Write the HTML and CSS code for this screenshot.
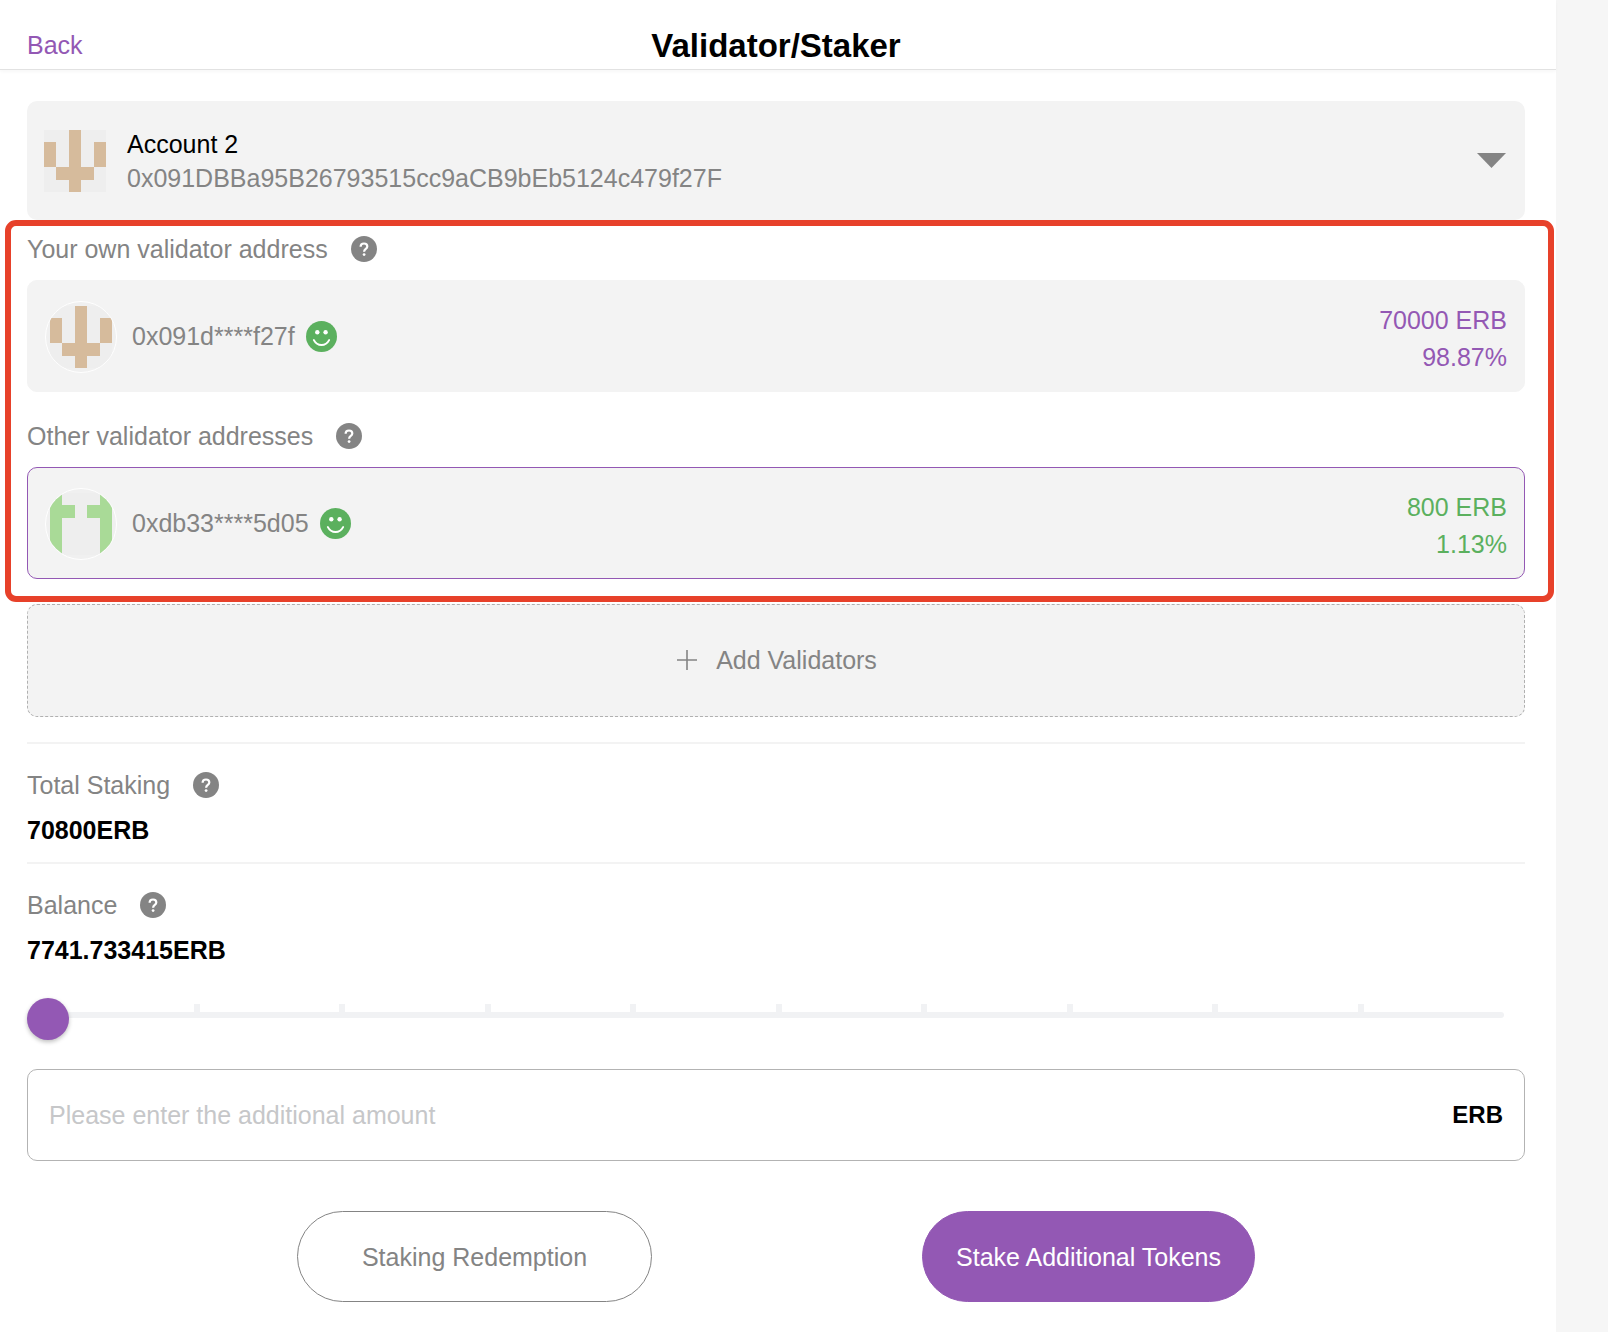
FILE: index.html
```html
<!DOCTYPE html>
<html lang="en">
<head>
<meta charset="utf-8">
<meta name="viewport" content="width=device-width, initial-scale=1">
<title>Validator/Staker</title>
<link rel="stylesheet" href="styles.css">
</head>
<body>
<svg class="sprite" aria-hidden="true">
  <symbol id="help" viewBox="0 0 26 26">
    <circle cx="13" cy="13" r="13" fill="#848484"/>
    <path d="M9.600 10.800C9.600 8.600 11 7.500 13 7.500s3.300 1.200 3.300 3c0 2.400-3.200 2.500-3.200 5.200" fill="none" stroke="#fff" stroke-width="2.200"/>
    <circle cx="13.100" cy="18.600" r="1.400" fill="#fff"/>
  </symbol>
  <symbol id="smile" viewBox="0 0 31 31">
    <circle cx="15.500" cy="15.500" r="15.500" fill="#5bb05e"/>
    <circle cx="11.300" cy="11.300" r="2.200" fill="#fff"/>
    <circle cx="19.600" cy="11.300" r="2.200" fill="#fff"/>
    <path d="M7.800 19c1.800 3.400 4.400 5 7.700 5s5.900-1.600 7.700-5" fill="none" stroke="#fff" stroke-width="1.800" stroke-linecap="round"/>
  </symbol>
  <symbol id="trident" viewBox="0 0 5 5">
    <path d="M0 0h5v5H0z" fill="#eee"/>
    <path d="M2 0h1v3h1V1h1v2H4v1H3v1H2V4H1V3H0V1h1v2h1z" fill="#d6bb9c"/>
  </symbol>
  <symbol id="pillars" viewBox="0 0 5 5">
    <path d="M0 0h5v5H0z" fill="#eee"/>
    <path d="M0 0h1v1h1v1H1v3H0zM5 0H4v1H3v1h1v3h1z" fill="#a9da97"/>
  </symbol>
</svg>
<div class="page">
  <div class="panel">
    <header class="topbar">
      <a class="back" href="#">Back</a>
      <h1 class="title">Validator/Staker</h1>
    </header>
    <main class="content">
      <button class="account" type="button" aria-haspopup="listbox">
        <svg class="identicon" shape-rendering="crispEdges" aria-hidden="true"><use href="#trident"/></svg>
        <span class="account-text">
          <span class="account-name">Account 2</span>
          <span class="account-address">0x091DBBa95B26793515cc9aCB9bEb5124c479f27F</span>
        </span>
        <svg class="caret" viewBox="0 0 29 15" aria-hidden="true"><path d="M0 0h29L14.500 15z" fill="#848484"/></svg>
      </button>

      <div class="validators">
        <section>
          <h2 class="label">Your own validator address <svg class="help" aria-hidden="true"><use href="#help"/></svg></h2>
          <div class="validator">
            <span class="avatar"><svg class="identicon" shape-rendering="crispEdges" aria-hidden="true"><use href="#trident"/></svg></span>
            <span class="address">0x091d****f27f</span>
            <svg class="smile" aria-hidden="true"><use href="#smile"/></svg>
            <div class="amount own"><div>70000 ERB</div><div>98.87%</div></div>
          </div>
        </section>
        <section class="others">
          <h2 class="label">Other validator addresses <svg class="help" aria-hidden="true"><use href="#help"/></svg></h2>
          <div class="validator selected">
            <span class="avatar"><svg class="identicon" shape-rendering="crispEdges" aria-hidden="true"><use href="#pillars"/></svg></span>
            <span class="address">0xdb33****5d05</span>
            <svg class="smile" aria-hidden="true"><use href="#smile"/></svg>
            <div class="amount"><div>800 ERB</div><div>1.13%</div></div>
          </div>
        </section>
      </div>

      <button class="add" type="button">
        <svg class="plus" viewBox="0 0 20 20" aria-hidden="true"><path d="M10 0v20M0 10h20" stroke="#848484" stroke-width="1.600"/></svg>
        Add Validators
      </button>

      <section class="stat">
        <h2 class="label">Total Staking <svg class="help" aria-hidden="true"><use href="#help"/></svg></h2>
        <div class="value">70800ERB</div>
      </section>
      <section class="stat">
        <h2 class="label">Balance <svg class="help" aria-hidden="true"><use href="#help"/></svg></h2>
        <div class="value">7741.733415ERB</div>
      </section>

      <div class="slider">
        <div class="ticks" aria-hidden="true"><i></i><i></i><i></i><i></i><i></i><i></i><i></i><i></i><i></i><i></i></div>
        <input class="range" type="range" min="0" max="100" value="0" aria-label="Share of balance">
      </div>

      <div class="field">
        <input class="field-input" id="amount" type="text" inputmode="decimal" placeholder="Please enter the additional amount" aria-label="Additional amount">
        <label class="unit" for="amount">ERB</label>
      </div>

      <div class="actions">
        <button class="btn outline" type="button">Staking Redemption</button>
        <button class="btn primary" type="button">Stake Additional Tokens</button>
      </div>
    </main>
  </div>
</div>
</body>
</html>
```
FILE: styles.css
```css
* { box-sizing: border-box; }

body {
  margin: 0;
  background: #f6f6f6;
  color: #000;
  font: 25px/28px "Liberation Sans", Arial, sans-serif;
}

button, input { font: inherit; }
button { cursor: pointer; }
svg { display: block; flex: none; }
.sprite { display: none; }

.page {
  min-height: 100vh;
  display: flex;
  padding-right: 52px;
}

.panel {
  flex: 1;
  min-width: 0;
  background: #fff;
}

.topbar {
  display: grid;
  grid-template-columns: 1fr auto 1fr;
  align-items: center;
  padding: 22px 31px 0 27px;
  line-height: 47px;
  border-bottom: 1px solid #e2e2e2;
  box-shadow: 0 2px 3px rgba(0, 0, 0, 0.03);
}

.back {
  color: #9358b4;
  text-decoration: none;
}

.title {
  margin: 0;
  font-size: 33px;
}

.content { padding: 31px 31px 30px 27px; }

.account {
  display: flex;
  align-items: center;
  gap: 21px;
  width: 100%;
  height: 119px;
  padding: 0 19px 0 17px;
  border: 0;
  border-radius: 10px;
  background: #f3f3f3;
  text-align: left;
  line-height: 34px;
}

.account-text {
  flex: 1;
  display: grid;
}

.account-name { color: #000; }
.account-address { color: #848484; }
.caret { width: 29px; height: 15px; }
.identicon { width: 62px; height: 62px; }

.validators { position: relative; }

/* highlight frame drawn round both validator groups */
.validators::after {
  content: "";
  position: absolute;
  inset: 0 -29px -23px -22px;
  border: 6px solid #e7412a;
  border-radius: 11px;
  pointer-events: none;
}

.others { margin-top: 15px; }

.label {
  display: flex;
  align-items: center;
  gap: 23px;
  height: 60px;
  margin: 0;
  padding-bottom: 2px;
  font-size: 25px;
  font-weight: 400;
  color: #848484;
}

.help { width: 26px; height: 26px; }

.validator {
  display: flex;
  align-items: center;
  height: 112px;
  padding: 0 17px;
  border: 1px solid #f3f3f3;
  border-radius: 10px;
  background: #f3f3f3;
}

.selected { border-color: #9358b4; }

.avatar {
  display: grid;
  place-items: center;
  width: 72px;
  height: 72px;
  margin: 2px 15px 0 0;
  border: 1px solid #fff;
  border-radius: 50%;
  background: #f0f0f0;
  overflow: hidden;
}

.address { color: #848484; }
.smile { width: 31px; height: 31px; margin-left: 11px; }

.amount {
  margin-left: auto;
  padding-top: 6px;
  line-height: 37px;
  text-align: right;
  color: #5bb05e;
}

.own { color: #9358b4; }

.add {
  display: flex;
  align-items: center;
  justify-content: center;
  gap: 19px;
  width: 100%;
  height: 113px;
  margin: 25px 0;
  padding: 0 0 2px 2px;
  border: 1px dashed #b0b0b0;
  border-radius: 10px;
  background: #f3f3f3;
  color: #848484;
}

.plus { width: 20px; height: 20px; }

.stat {
  padding: 12px 0 18px;
  border-top: 2px solid #f3f3f3;
}

.value { font-weight: 700; }

.slider {
  display: grid;
  margin: 16px 0 37px;
}

.ticks, .range { grid-area: 1 / 1; }

.ticks {
  display: grid;
  grid-template-columns: repeat(10, 1fr);
  height: 8px;
  margin: 6px 16px 0 27px;
}

.ticks i { border-right: 6px solid #f1f2f4; }
.ticks i:last-child { border: 0; }

.range {
  appearance: none;
  height: 34px;
  margin: 0 21px 0 0;
  background: none;
}

.range::-webkit-slider-runnable-track {
  height: 6px;
  border-radius: 3px;
  background: #f1f2f4;
}

.range::-webkit-slider-thumb {
  appearance: none;
  width: 42px;
  height: 42px;
  margin-top: -14px;
  border-radius: 50%;
  background: #9358b4;
  box-shadow: 0 2px 4px rgba(0, 0, 0, 0.25);
}

.field {
  display: flex;
  align-items: center;
  height: 92px;
  padding: 0 21px;
  border: 1px solid #b3b3b3;
  border-radius: 10px;
}

.field-input {
  flex: 1;
  min-width: 0;
  height: 100%;
  padding: 0;
  border: 0;
  outline: 0;
  background: none;
}

.field-input::placeholder { color: #c6c7c9; }

.unit {
  font-size: 24px;
  font-weight: 700;
}

.actions {
  display: flex;
  justify-content: space-evenly;
  margin-top: 50px;
}

.btn {
  height: 91px;
  border: 1px solid #848484;
  border-radius: 46px;
  background: #fff;
  color: #848484;
}

.outline { padding: 0 64px; }

.primary {
  padding: 0 33px;
  border-color: #9358b4;
  background: #9358b4;
  color: #fff;
}
```
